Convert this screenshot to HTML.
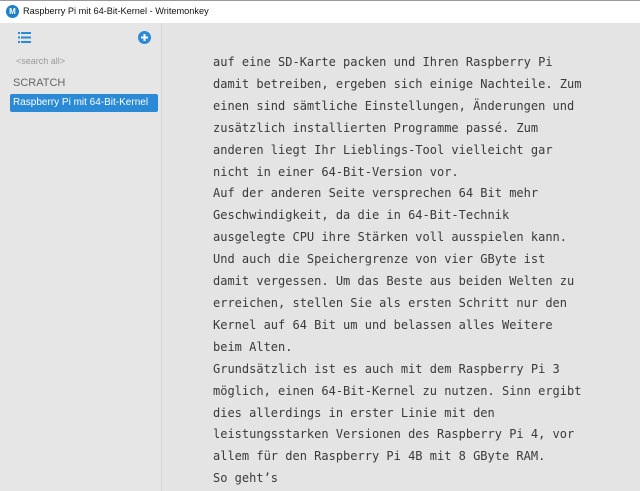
<!DOCTYPE html>
<html><head><meta charset="utf-8"><style>
html,body{margin:0;padding:0;width:640px;height:491px;overflow:hidden;background:#e4e4e4;font-family:"Liberation Sans",sans-serif;position:relative}
#title{position:absolute;left:0;top:0;width:640px;height:23px;background:#fff;border-top:1px solid #9a9a9a;box-sizing:border-box}
#title .logo{position:absolute;left:6px;top:4px;width:13px;height:13px;border-radius:50%;background:#1f7fc7;color:#fff;font-size:8px;line-height:13px;text-align:center;font-weight:bold}
#title .t{position:absolute;left:23px;top:5px;font-size:9.2px;color:#111}
#side{position:absolute;left:0;top:23px;width:161px;height:468px;background:#e6e6e6;border-right:1px solid #d6d6d6}
#main{position:absolute;left:162px;top:23px;right:0;bottom:0;background:#e4e4e4}
.sel{position:absolute;left:10px;top:94px;width:148px;height:18px;background:#2b8ad6;border-radius:2px;color:#fff;font-size:10px;line-height:18px;padding-left:3px;box-sizing:border-box}
#text{position:absolute;left:213px;top:52px;font-family:"DejaVu Sans Mono","Liberation Mono",monospace;font-size:12px;line-height:21.9px;color:#3a3a3a;white-space:pre}
</style></head><body>
<div id="title"><div class="logo">M</div><div class="t">Raspberry Pi mit 64-Bit-Kernel - Writemonkey</div></div>
<div id="side"></div>
<div id="main"></div>
<svg style="position:absolute;left:18px;top:32px" width="13" height="11" viewBox="0 0 13 11">
<g fill="#2b8ad6"><rect x="0" y="0" width="2" height="2"/><rect x="3" y="0" width="10" height="2"/><rect x="0" y="4.5" width="2" height="2"/><rect x="3" y="4.5" width="10" height="2"/><rect x="0" y="9" width="2" height="2"/><rect x="3" y="9" width="10" height="2"/></g></svg>
<svg style="position:absolute;left:138px;top:31px" width="13" height="13" viewBox="0 0 13 13"><circle cx="6.5" cy="6.5" r="6.5" fill="#2b8ad6"/><rect x="5.5" y="3" width="2" height="7" fill="#fff"/><rect x="3" y="5.5" width="7" height="2" fill="#fff"/></svg>
<div style="position:absolute;left:16px;top:56px;font-size:9px;color:#999">&lt;search all&gt;</div>
<div style="position:absolute;left:13px;top:77px;font-size:11px;color:#666">SCRATCH</div>
<div class="sel">Raspberry Pi mit 64-Bit-Kernel</div>
<div id="text">auf eine SD-Karte packen und Ihren Raspberry Pi
damit betreiben, ergeben sich einige Nachteile. Zum
einen sind sämtliche Einstellungen, Änderungen und
zusätzlich installierten Programme passé. Zum
anderen liegt Ihr Lieblings-Tool vielleicht gar
nicht in einer 64-Bit-Version vor.
Auf der anderen Seite versprechen 64 Bit mehr
Geschwindigkeit, da die in 64-Bit-Technik
ausgelegte CPU ihre Stärken voll ausspielen kann.
Und auch die Speichergrenze von vier GByte ist
damit vergessen. Um das Beste aus beiden Welten zu
erreichen, stellen Sie als ersten Schritt nur den
Kernel auf 64 Bit um und belassen alles Weitere
beim Alten.
Grundsätzlich ist es auch mit dem Raspberry Pi 3
möglich, einen 64-Bit-Kernel zu nutzen. Sinn ergibt
dies allerdings in erster Linie mit den
leistungsstarken Versionen des Raspberry Pi 4, vor
allem für den Raspberry Pi 4B mit 8 GByte RAM.
So geht’s</div>
</body></html>
